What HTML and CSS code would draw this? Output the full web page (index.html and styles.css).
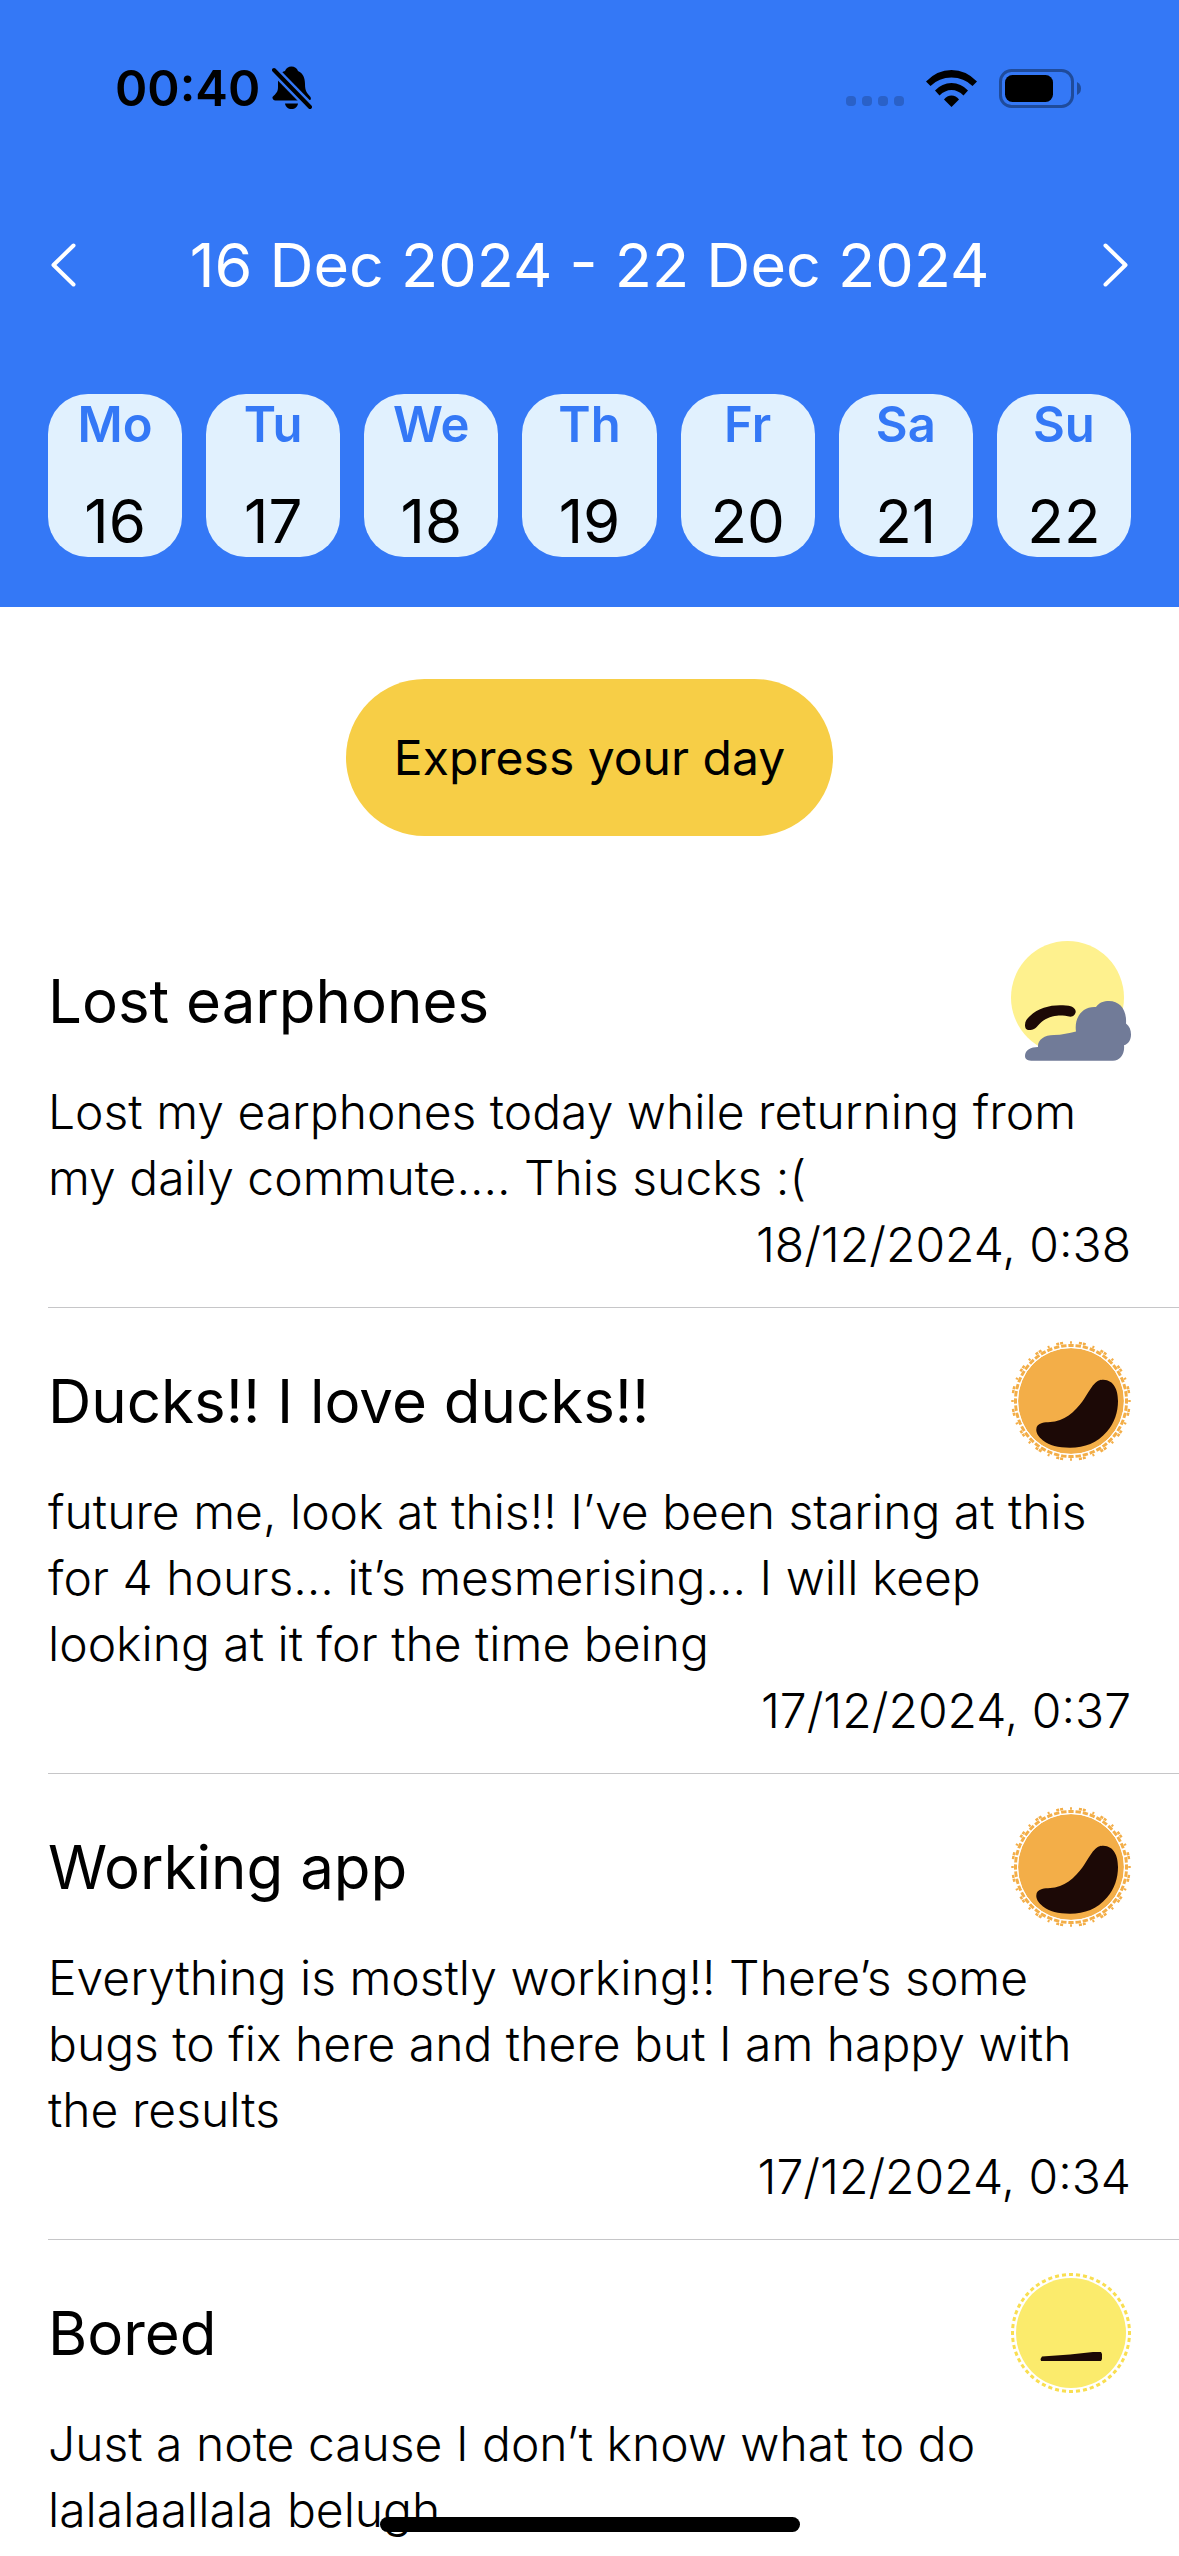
FILE: index.html
```html
<!DOCTYPE html>
<html lang="en">
<head>
<meta charset="utf-8">
<meta name="viewport" content="width=device-width, initial-scale=1">
<title>Mood diary</title>
<link rel="stylesheet" href="styles.css">
</head>
<body>
<svg class="sprite" aria-hidden="true">
  <symbol id="mood-happy" viewBox="0 0 120 120">
    <circle cx="60" cy="60" r="53" fill="#f3ae48"/>
    <circle cx="60" cy="60" r="55.500" fill="none" stroke="#f3ae48" stroke-width="3" pathLength="368" stroke-dasharray="5.667 2" stroke-dashoffset="2.833"/>
    <circle cx="60" cy="60" r="53.400" fill="none" stroke="#fff" stroke-width="1"/>
    <circle cx="60" cy="60" r="58.500" fill="none" stroke="#f3ae48" stroke-width="2.500" pathLength="368" stroke-dasharray="2 7 3 1 3 7" stroke-dashoffset="1"/>
    <path fill="#1c0906" d="M25.300 88.300C25.300 85 27.500 83 31 82C36 80.500 42 81.800 49 79C55 77 60.500 73 65.700 67.300C74 59 78 48 84 42.300C87 39.200 89 38.700 92.300 38.700C103 39 107 49 107 60C107 71 103.500 82 96 90.500C86 102 74 106.700 59 106.700C47 106.700 38.500 104.500 32 99.500C27.500 96 25 92 25.300 88.300Z"/>
  </symbol>
  <symbol id="mood-bored" viewBox="0 0 120 120">
    <circle cx="60" cy="60" r="55" fill="#fbeb6c"/>
    <circle cx="60" cy="60" r="58.500" fill="none" stroke="#f9de50" stroke-width="3" pathLength="364" stroke-dasharray="4 3" stroke-dashoffset="2"/>
    <path fill="#1c0906" d="M29.500 86L31 83.500L59 81.500L82 79H90L91 81V86L90 88H30Z"/>
  </symbol>
  <symbol id="mood-sad" viewBox="0 0 120 120">
    <circle cx="56.500" cy="56.500" r="56.500" fill="#fef18e"/>
    <path fill="#1c0906" d="M14 84C14 80 16 77.500 19 75C27 67.500 38 64.300 49 64.300C53 64.300 57 64.500 60.500 65.500C63 66.500 64.700 68.500 64.700 70.500C64.700 73 62.500 75.700 59.500 75.700C55 75 51 74.300 46 74.700C38 75.500 32 79 27 84.500C24 88 22 89 18.500 89C15 89 14 87 14 84Z"/>
    <path fill="#717b98" d="M22 119.700C17 119.700 14 118.500 14 115C14 109 20 106 27 106C26.500 99 33 94 43 94C51 94 58 92 65 90.500C63 77 71 65 85 66C88 61.500 93 60 98 60C109 60 116 69 115 82.500C118.500 85 120 89 120 93.500C120 99 117.500 103 113 104.300C114 113 109 119.700 102 119.700Z"/>
  </symbol>
</svg>

<div class="app">
  <header class="header">
    <div class="status">
      <div class="status-group">
        <span class="clock">00:40</span>
        <svg class="bell" viewBox="0 0 40 44" role="img" aria-label="Silent mode">
          <path d="M3.500 34.500A3 3 0 0 1 0.500 31C4 27.500 6 26 6 21V15C6 9 9 6 13 5C14 2 16.500 0.500 19.500 0.500C22.500 0.500 25 2 26 5C31 7 33 12 33 18C33 25 35 27 38.500 31C39.500 34 38.500 34.500 36 34.500Z"/>
          <path class="bell-gap" d="M-1 1L41 44"/>
          <path d="M13 37.500H26C25.500 41 23 43 19.500 43S13.500 41 13 37.500Z"/>
          <path class="bell-slash" d="M2 4L38 41"/>
        </svg>
      </div>
      <div class="status-group status-group-end">
        <span class="signal"><i></i><i></i><i></i><i></i></span>
        <svg class="wifi" viewBox="0 0 51 37" role="img" aria-label="Wi-Fi">
          <path d="M0 11.500Q11 0 25.500 0T51 11.500L46.500 16Q38 7.500 25.500 7.500T4.500 16Z"/>
          <path d="M9 20.500Q16 13 25.500 13T42 20.500L37.500 25.500Q32 20 25.500 20T13.500 25.500Z"/>
          <path d="M18 29.500Q21 25.500 25.500 25.500T33 29.500L25.500 37Z"/>
        </svg>
        <svg class="battery" viewBox="0 0 82 39" role="img" aria-label="Battery">
          <rect x="1.500" y="1.500" width="72" height="36" rx="11" fill="none" stroke="#1f4b9b" stroke-width="3"/>
          <rect x="6" y="6" width="48" height="27" rx="7.500"/>
          <path fill="#1f4b9b" d="M78 13Q82 15 82 19.500T78 26Z"/>
        </svg>
      </div>
    </div>

    <nav class="week-nav" aria-label="Week">
      <button class="arrow" aria-label="Previous week"><svg viewBox="0 0 25 44"><path d="M22.500 2.500L2.500 22L22.500 41.500"/></svg></button>
      <h1 class="week-title">16 Dec 2024 - 22 Dec 2024</h1>
      <button class="arrow" aria-label="Next week"><svg viewBox="0 0 25 44"><path d="M2.500 2.500L22.500 22L2.500 41.500"/></svg></button>
    </nav>

    <div class="days">
      <button class="day"><span class="day-name">Mo</span><span class="day-number">16</span></button>
      <button class="day"><span class="day-name">Tu</span><span class="day-number">17</span></button>
      <button class="day"><span class="day-name">We</span><span class="day-number">18</span></button>
      <button class="day"><span class="day-name">Th</span><span class="day-number">19</span></button>
      <button class="day"><span class="day-name">Fr</span><span class="day-number">20</span></button>
      <button class="day"><span class="day-name">Sa</span><span class="day-number">21</span></button>
      <button class="day"><span class="day-name">Su</span><span class="day-number">22</span></button>
    </div>
  </header>

  <main class="content">
    <button class="express">Express your day</button>

    <article class="entry">
      <div class="entry-head">
        <h2 class="entry-title">Lost earphones</h2>
        <svg class="mood" role="img" aria-label="Sad"><use href="#mood-sad"/></svg>
      </div>
      <p class="entry-text">Lost my earphones today while returning from my daily commute.... This sucks :(</p>
      <time class="entry-date">18/12/2024, 0:38</time>
    </article>

    <article class="entry">
      <div class="entry-head">
        <h2 class="entry-title">Ducks!! I love ducks!!</h2>
        <svg class="mood" role="img" aria-label="Happy"><use href="#mood-happy"/></svg>
      </div>
      <p class="entry-text">future me, look at this!! I’ve been staring at this for 4 hours... it’s mesmerising... I will keep looking at it for the time being</p>
      <time class="entry-date">17/12/2024, 0:37</time>
    </article>

    <article class="entry">
      <div class="entry-head">
        <h2 class="entry-title">Working app</h2>
        <svg class="mood" role="img" aria-label="Happy"><use href="#mood-happy"/></svg>
      </div>
      <p class="entry-text">Everything is mostly working!! There’s some bugs to fix here and there but I am happy with the results</p>
      <time class="entry-date">17/12/2024, 0:34</time>
    </article>

    <article class="entry">
      <div class="entry-head">
        <h2 class="entry-title">Bored</h2>
        <svg class="mood" role="img" aria-label="Bored"><use href="#mood-bored"/></svg>
      </div>
      <p class="entry-text">Just a note cause I don’t know what to do lalalaallala belugh</p>
    </article>
  </main>
  <div class="home-bar"></div>
</div>
</body>
</html>
```
FILE: styles.css
```css
* {
  box-sizing: border-box;
}

body {
  margin: 0;
  background: #fff;
  color: #000;
  font-family: Inter, "Liberation Sans", sans-serif;
}

button {
  margin: 0;
  padding: 0;
  border: 0;
  background: none;
  color: inherit;
  font: inherit;
}

.sprite {
  display: block;
  width: 0;
  height: 0;
}

.app {
  display: flex;
  flex-direction: column;
  height: 100vh;
}

.header {
  flex: none;
  padding: 0 48px 50px;
  background: #3478f6;
}

.status {
  display: flex;
  justify-content: space-between;
  align-items: center;
  height: 176px;
  padding: 0 50px 0 67px;
}

.status-group {
  display: flex;
  align-items: center;
  gap: 12px;
}

.status-group-end {
  gap: 22px;
}

.clock {
  font-size: 49px;
  font-weight: 600;
}

.bell {
  width: 40px;
  height: 44px;
}

.bell-gap {
  stroke: #3478f6;
  stroke-width: 9;
}

.bell-slash {
  stroke: #000;
  stroke-width: 4;
  stroke-linecap: round;
}

.signal {
  display: flex;
  align-self: flex-end;
  gap: 6px;
  padding-bottom: 2px;
}

.signal i {
  width: 10px;
  height: 10px;
  border-radius: 4px;
  background: #2a61c8;
}

.wifi {
  width: 51px;
  height: 37px;
}

.battery {
  width: 82px;
  height: 39px;
}

.week-nav {
  display: flex;
  justify-content: space-between;
  align-items: center;
  height: 177px;
  color: #fff;
}

.arrow {
  display: flex;
  padding: 0 3px;
}

.arrow svg {
  width: 25px;
  height: 44px;
  fill: none;
  stroke: currentColor;
  stroke-width: 4;
  stroke-linecap: round;
  stroke-linejoin: round;
}

.week-title {
  margin: 0;
  font-size: 61px;
  font-weight: 400;
}

.days {
  display: grid;
  grid-template-columns: repeat(7, 1fr);
  gap: 24px;
  padding-top: 41px;
}

.day {
  display: flex;
  flex-direction: column;
  align-items: center;
  gap: 29px;
  border-radius: 40px;
  background: #e1f1fe;
}

.day-name {
  color: #3478f6;
  font-size: 49px;
  font-weight: 600;
  line-height: 62px;
}

.day-number {
  font-size: 60px;
  line-height: 72px;
}

.content {
  flex: 1;
  min-height: 0;
  padding-top: 72px;
  overflow: hidden;
}

.express {
  display: block;
  margin: 0 auto 72px;
  padding: 0 48px;
  border-radius: 79px;
  background: #f7ce46;
  font-size: 48px;
  line-height: 157px;
}

.entry {
  display: flex;
  flex-direction: column;
  margin-left: 48px;
  padding: 33px 48px 29px 0;
  border-bottom: 1px solid #c6c6c8;
}

.entry-head {
  display: flex;
  justify-content: space-between;
  align-items: center;
  margin-bottom: 18px;
}

.entry-title {
  margin: 0;
  font-size: 60px;
  font-weight: 400;
}

.mood {
  width: 120px;
  height: 120px;
}

.entry-text,
.entry-date {
  margin: 0;
  font-size: 48px;
  font-weight: 300;
  line-height: 66px;
}

.entry-date {
  align-self: flex-end;
  margin-top: 1px;
}

.home-bar {
  position: fixed;
  bottom: 24px;
  left: 50%;
  width: 420px;
  height: 15px;
  margin-left: -210px;
  border-radius: 8px;
  background: #000;
}
```
